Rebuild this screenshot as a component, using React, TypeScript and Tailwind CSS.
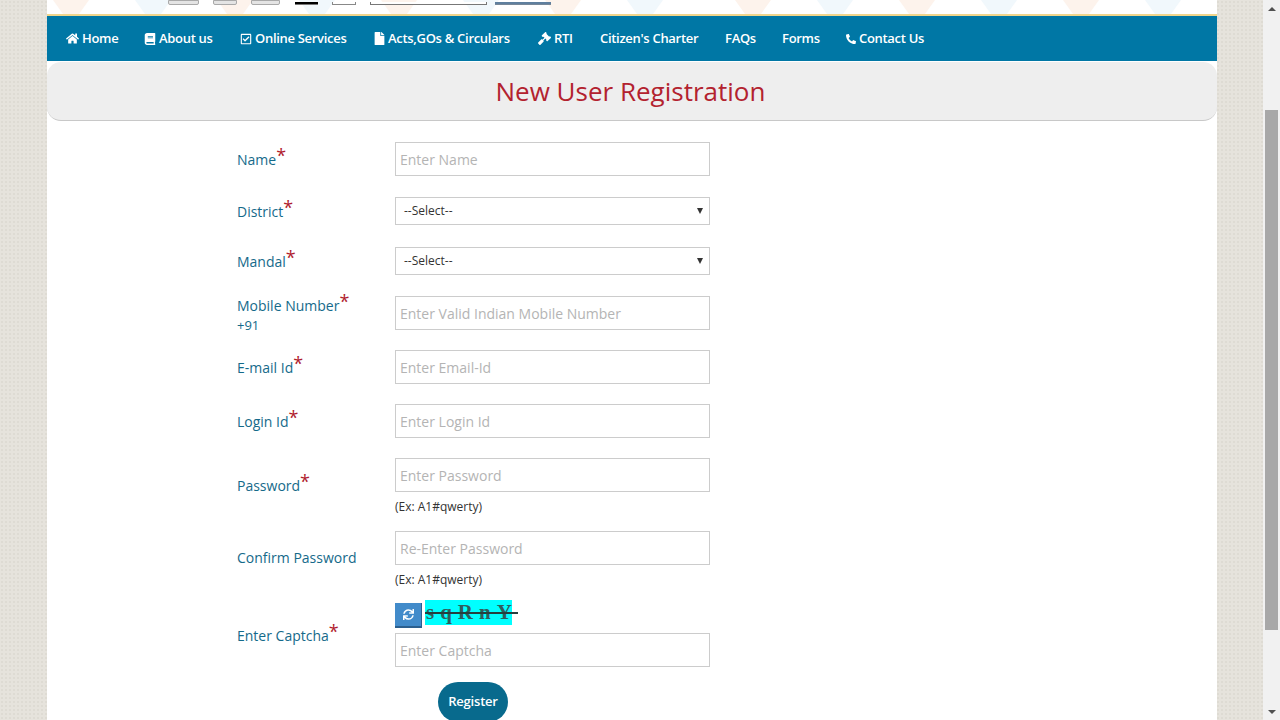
import { FaHome, FaBook, FaRegCheckSquare, FaFile, FaGavel, FaPhone, FaSync } from "react-icons/fa";
import type { ReactNode } from "react";

const nav: { label: string; icon?: ReactNode; w: string }[] = [
  { label: "Home", icon: <FaHome className="w-[13px] h-[13px]" />, w: "w-[78px]" },
  { label: "About us", icon: <FaBook className="w-[12px] h-[12px]" />, w: "w-[96px]" },
  { label: "Online Services", icon: <FaRegCheckSquare className="w-[12px] h-[12px]" />, w: "w-[134px]" },
  { label: "Acts,GOs & Circulars", icon: <FaFile className="w-[11px] h-[13px]" />, w: "w-[164px]" },
  { label: "RTI", icon: <FaGavel className="w-[13px] h-[13px]" />, w: "w-[62px]" },
  { label: "Citizen's Charter", w: "w-[125px]" },
  { label: "FAQs", w: "w-[57px]" },
  { label: "Forms", w: "w-[64px]" },
  { label: "Contact Us", icon: <FaPhone className="w-[10px] h-[10px] -scale-x-100" />, w: "w-[100px]" },
];

function Label({ text, star = true, sub, className = "" }: { text: string; star?: boolean; sub?: string; className?: string }) {
  return (
    <div className={`w-[158px] shrink-0 text-[14px] leading-[20px] text-[#156a8a] ${className}`}>
      <div>
        {text}
        {star && <span className="text-[18px] leading-[14px] text-[#b01c2e] relative -top-[3px]">*</span>}
      </div>
      {sub && <div className="text-[13px] leading-[19px]">{sub}</div>}
    </div>
  );
}

function TextBox({ placeholder }: { placeholder: string }) {
  return (
    <input
      placeholder={placeholder}
      className="w-[315px] h-[34px] border border-[#cccccc] bg-white px-[4px] text-[14px] text-[#333333] placeholder:text-[#b4b4b4] outline-none"
    />
  );
}

function SelectBox() {
  return (
    <div className="w-[315px] h-[28px] border border-[#cccccc] bg-white pl-[8px] pr-[6px] flex items-center justify-between text-[12px] text-[#333333]">
      <span>--Select--</span>
      <span className="w-0 h-0 border-x-[3px] border-x-transparent border-t-[6px] border-t-[#333333]" />
    </div>
  );
}

function Hint() {
  return <div className="text-[12px] leading-[17px] text-[#333333] mt-[6px]">(Ex: A1#qwerty)</div>;
}

export default function App() {
  return (
    <div
      className="flex h-[720px] overflow-hidden bg-[#e6e3dc] bg-[radial-gradient(#dedbd3_1px,transparent_1px)] bg-[length:4px_4px]"
      style={{ fontFamily: '"Open Sans", "Noto Sans", sans-serif' }}
    >
      <div className="flex-1 min-w-0 pl-[47px] pr-[46px]">
        <div className="w-[1170px] h-[720px] bg-white overflow-hidden">
          {/* cropped header */}
          <div className="relative h-[16px] bg-white border-b-2 border-[#f0d58c] overflow-hidden">
            <svg className="absolute inset-0" width="1170" height="14" viewBox="0 0 1170 14" aria-hidden="true">
              {[6, 88, 170, 252, 334, 416, 498, 580, 688, 770, 852, 934, 1016, 1098].map((x, i) => (
                <polygon
                  key={x}
                  points={`${x},0 ${x + 36},0 ${x + 26},14 ${x + 10},14`}
                  fill={i % 2 === 0 ? "#fdf3ec" : "#f1f8fc"}
                />
              ))}
            </svg>
            <div className="relative flex items-end h-[5px] pl-[121px]">
              <div className="w-[31px] h-[5px] bg-[#e4e4e4] border border-[#a9a9a9] rounded-b-[2px]" />
              <div className="ml-[14px] w-[24px] h-[5px] bg-[#e4e4e4] border border-[#a9a9a9] rounded-b-[2px]" />
              <div className="ml-[14px] w-[29px] h-[5px] bg-[#e4e4e4] border border-[#a9a9a9] rounded-b-[2px]" />
              <div className="ml-[15px] w-[23px] h-[3px] bg-black border-b border-[#777777]" />
              <div className="ml-[14px] w-[24px] h-[3px] bg-white border border-t-0 border-[#888888]" />
              <div className="ml-[14px] w-[117px] h-[3px] bg-white border border-t-0 border-[#777777]" />
              <div className="ml-[8px] w-[56px] h-[3px] bg-[#5f7f9e] border-b border-[#778899]" />
            </div>
          </div>

          {/* nav */}
          <nav className="h-[45px] bg-[#0077a5] flex items-center pl-[19px] text-white text-[13px] font-semibold tracking-[-0.3px]">
            {nav.map((n) => (
              <div key={n.label} className={`${n.w} shrink-0 flex items-center gap-[3px]`}>
                {n.icon}
                <span>{n.label}</span>
              </div>
            ))}
          </nav>

          {/* title */}
          <div className="mt-[1px] h-[59px] bg-[#eeeeee] border-b border-[#c8c8c8] rounded-[14px] flex items-center justify-center">
            <h1 className="text-[26px] text-[#b3222f] leading-none ml-[-3px]">New User Registration</h1>
          </div>

          {/* form */}
          <form className="pl-[190px] pt-[21px] flex flex-col">
            <div className="flex h-[34px]">
              <Label text="Name" className="pt-[8px]" />
              <TextBox placeholder="Enter Name" />
            </div>
            <div className="flex h-[28px] mt-[21px]">
              <Label text="District" className="pt-[5px]" />
              <SelectBox />
            </div>
            <div className="flex h-[28px] mt-[22px]">
              <Label text="Mandal" className="pt-[5px]" />
              <SelectBox />
            </div>
            <div className="flex h-[34px] mt-[21px]">
              <Label text="Mobile Number" sub="+91" />
              <TextBox placeholder="Enter Valid Indian Mobile Number" />
            </div>
            <div className="flex h-[34px] mt-[20px]">
              <Label text="E-mail Id" className="pt-[8px]" />
              <TextBox placeholder="Enter Email-Id" />
            </div>
            <div className="flex h-[34px] mt-[20px]">
              <Label text="Login Id" className="pt-[8px]" />
              <TextBox placeholder="Enter Login Id" />
            </div>
            <div className="flex mt-[20px]">
              <Label text="Password" className="pt-[18px]" />
              <div>
                <TextBox placeholder="Enter Password" />
                <Hint />
              </div>
            </div>
            <div className="flex mt-[16px]">
              <Label text="Confirm Password" star={false} className="pt-[17px]" />
              <div>
                <TextBox placeholder="Re-Enter Password" />
                <Hint />
              </div>
            </div>
            <div className="flex mt-[12px]">
              <Label text="Enter Captcha" className="pt-[26px]" />
              <div className="flex flex-col">
                <div className="flex items-start h-[33px]">
                  <div className="mt-[3px] w-[27px] h-[25px] bg-[#428bca] border-b-2 border-r border-[#2b5f8e] flex items-center justify-center text-white">
                    <FaSync className="w-[11px] h-[11px]" />
                  </div>
                  <div className="relative ml-[3px] w-[87px] h-[25px] bg-[#00ffff] flex items-center pl-[1px]">
                    <span
                      className="text-[21px] font-bold leading-none tracking-[6px] text-[#2f5d5d] whitespace-nowrap"
                      style={{ fontFamily: '"Liberation Serif", serif' }}
                    >
                      sqRnY
                    </span>
                    <span className="absolute left-0 top-[12px] w-[93px] h-[2px] bg-[#24403f]" />
                  </div>
                </div>
                <TextBox placeholder="Enter Captcha" />
                <button
                  type="button"
                  className="mt-[15px] ml-[43px] w-[70px] h-[40px] rounded-[20px] bg-[#086a8d] text-white text-[13px] font-semibold tracking-[-0.2px]"
                >
                  Register
                </button>
              </div>
            </div>
          </form>
        </div>
      </div>

      {/* scrollbar */}
      <div className="w-[17px] shrink-0 h-[720px] bg-[#f1f1f1] flex flex-col items-center">
        <div className="h-[17px] flex items-center justify-center">
          <span className="w-0 h-0 border-x-[4px] border-x-transparent border-b-[4px] border-b-[#505050]" />
        </div>
        <div className="mt-[93px] w-[13px] h-[520px] bg-[#a8a8a8]" />
        <div className="mt-[73px] h-[17px] flex items-center justify-center">
          <span className="w-0 h-0 border-x-[4px] border-x-transparent border-t-[4px] border-t-[#505050]" />
        </div>
      </div>
    </div>
  );
}
